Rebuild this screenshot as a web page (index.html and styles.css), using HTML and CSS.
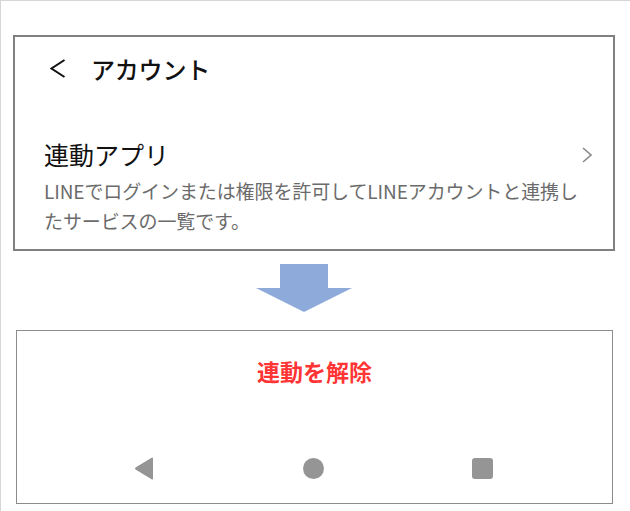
FILE: index.html
```html
<!DOCTYPE html>
<html lang="ja">
<head>
    <meta charset="UTF-8">
    <meta name="viewport" content="width=device-width, initial-scale=1.0">
    <title>連動アプリ</title>
    <link rel="stylesheet" href="styles.css">
</head>
<body>
    <div class="frame">
        <!-- 上: アカウント画面 -->
        <section class="screen screen-top">
            <div class="header">
                <svg class="back" width="16" height="19" viewBox="0 0 16 19">
                    <polyline points="14.5,1 1.5,9.5 14.5,18" fill="none" stroke="#111" stroke-width="2" stroke-linejoin="miter"/>
                </svg>
                <h1 class="title">アカウント</h1>
            </div>
            <div class="item">
                <div class="item-row">
                    <span class="item-name">連動アプリ</span>
                    <svg class="next" width="10" height="16" viewBox="0 0 10 16">
                        <polyline points="1,1 9,8 1,15" fill="none" stroke="#8a8a8a" stroke-width="1.6"/>
                    </svg>
                </div>
                <p class="item-desc">LINEでログインまたは権限を許可してLINEアカウントと連携したサービスの一覧です。</p>
            </div>
        </section>

        <!-- 矢印 -->
        <svg class="arrow" width="96" height="48" viewBox="0 0 96 48">
            <polygon points="24,0 72,0 72,24 96,24 48,48 0,24 24,24" fill="#8eaadb"/>
        </svg>

        <!-- 下: 連動を解除 -->
        <section class="screen screen-bottom">
            <button class="unlink">連動を解除</button>
            <div class="navbar">
                <svg width="21" height="23" viewBox="0 0 21 23">
                    <path d="M19 1.5 L19 21.5 Q19 23 17.6 22.2 L1.5 12.5 Q0.5 11.5 1.5 10.5 L17.6 0.8 Q19 0 19 1.5 Z" fill="#959595"/>
                </svg>
                <span class="nav-home"></span>
                <span class="nav-recent"></span>
            </div>
        </section>
    </div>
</body>
</html>
```

FILE: styles.css
```css
* {
    box-sizing: border-box;
    margin: 0;
    padding: 0;
}

body {
    width: 630px;
    height: 511px;
    overflow: hidden;
    background: #fff;
    font-family: "Noto Sans CJK JP", "Noto Sans", sans-serif;
}

.frame {
    height: 511px;
    border-top: 1px solid #d6d6d6;
    border-left: 1px solid #d6d6d6;
    padding-top: 34px;
    padding-left: 12px;
}

.screen {
    background: #fff;
}

.screen-top {
    width: 602px;
    height: 216px;
    border: 2px solid #808080;
}

.header {
    display: flex;
    align-items: center;
    height: 63px;
    padding-left: 35px;
}

.back {
    display: block;
    margin-right: 25px;
}

.title {
    font-size: 24px;
    font-weight: 500;
    color: #111;
    letter-spacing: -0.2px;
}

.item {
    padding: 37px 21px 0 29px;
}

.item-row {
    display: flex;
    align-items: center;
    justify-content: space-between;
    height: 34px;
}

.item-name {
    font-size: 25px;
    color: #111;
    line-height: 34px;
}

.next {
    display: block;
    margin-top: 2px;
}

.item-desc {
    margin-top: 5px;
    font-size: 19px;
    line-height: 30px;
    color: #6b6b6b;
    letter-spacing: -0.1px;
}

.arrow {
    display: block;
    margin: 13px 0 18px 243px;
}

.screen-bottom {
    display: flex;
    flex-direction: column;
    align-items: center;
    width: 597px;
    height: 174px;
    margin-left: 3px;
    border: 1px solid #8c8c8c;
    padding: 24px 0 23px;
}

.unlink {
    background: transparent;
    border: none;
    font-family: inherit;
    font-size: 23px;
    font-weight: 700;
    line-height: 32px;
    color: #ff3535;
}

.navbar {
    margin-top: auto;
    display: flex;
    align-items: center;
    gap: 148px;
    margin-left: -2px;
}

.navbar svg {
    display: block;
}

.nav-home {
    width: 21px;
    height: 21px;
    border-radius: 50%;
    background: #959595;
}

.nav-recent {
    width: 21px;
    height: 21px;
    border-radius: 3px;
    background: #959595;
}
```
